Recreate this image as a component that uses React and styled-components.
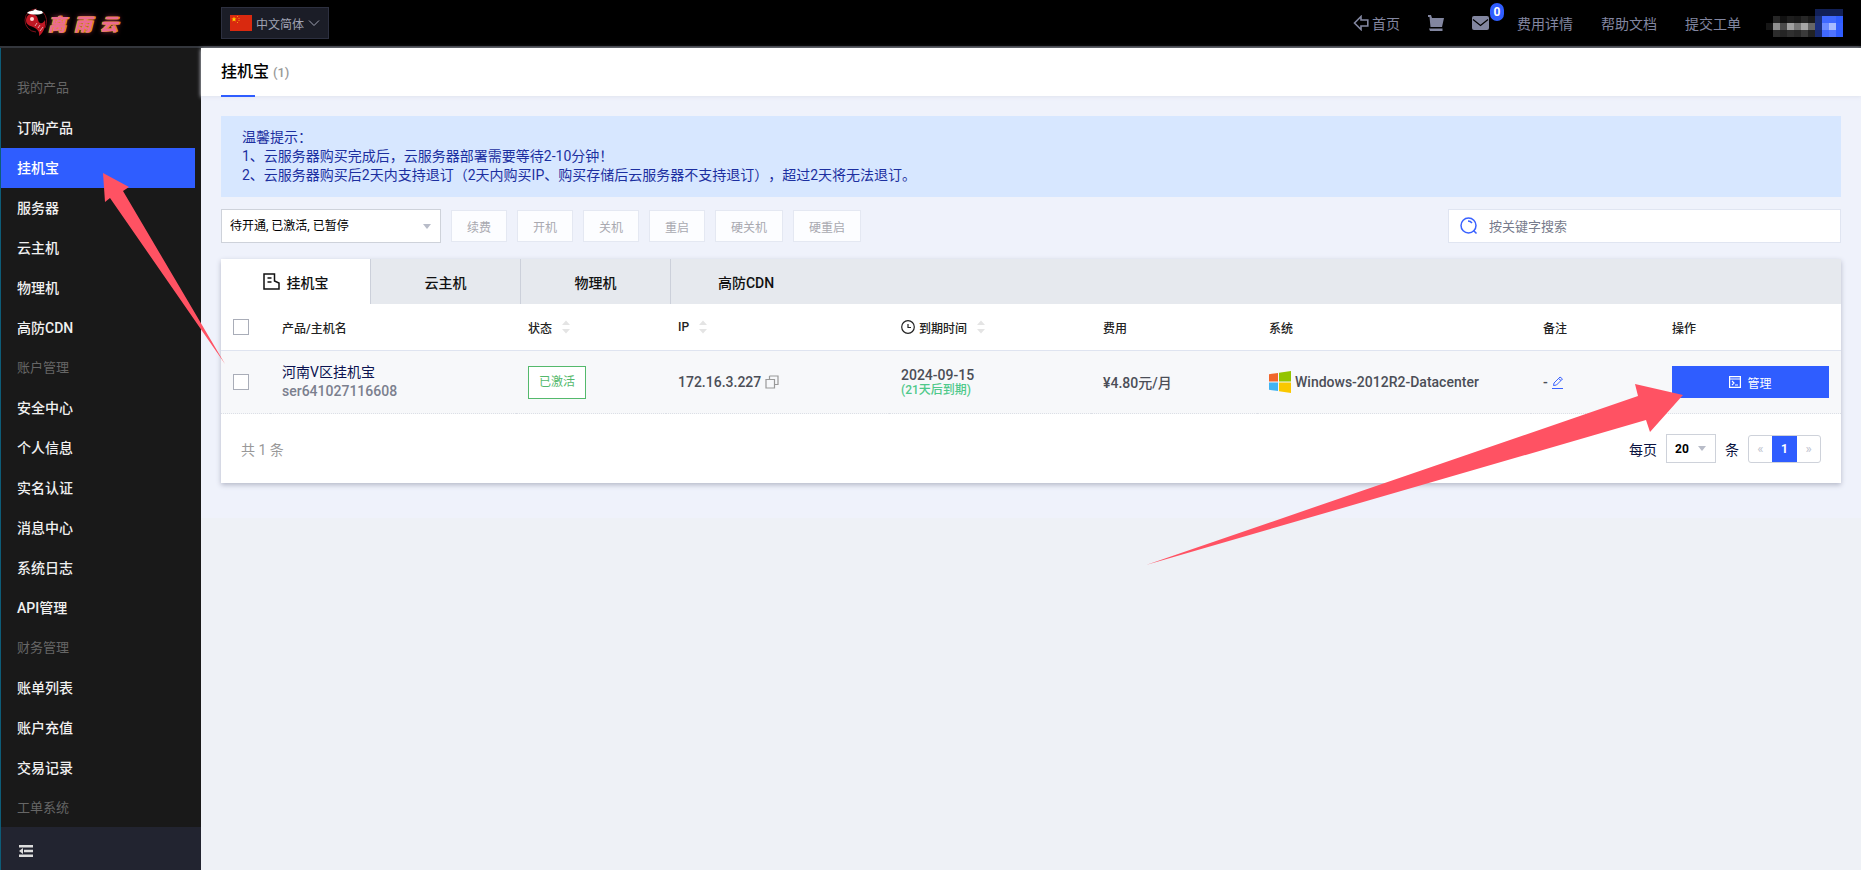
import React from 'react'
import styled, { createGlobalStyle, css } from 'styled-components'

const GlobalStyle = createGlobalStyle`
  * {
    box-sizing: border-box;
  }
  body {
    margin: 0;
    font-family: Roboto, 'Noto Sans CJK SC', sans-serif;
    font-size: 14px;
    color: #000;
    background: #eef1f6;
  }
  button, input, select {
    font-family: inherit;
  }
  a {
    color: inherit;
    text-decoration: none;
  }
`

const menu = [
  { title: '我的产品', items: ['订购产品', '挂机宝', '服务器', '云主机', '物理机', '高防CDN'] },
  { title: '账户管理', items: ['安全中心', '个人信息', '实名认证', '消息中心', '系统日志', 'API管理'] },
  { title: '财务管理', items: ['账单列表', '账户充值', '交易记录'] },
  { title: '工单系统', items: [] },
]

const actions = ['续费', '开机', '关机', '重启', '硬关机', '硬重启']

const tabs = ['挂机宝', '云主机', '物理机', '高防CDN']

const columns = [49, 246, 150, 223, 202, 166, 274, 129, 181]

const mosaic = [
  ['#000', '#262626', '#111', '#1e1e1e', '#191919', '#272727', '#1a1a1a', '#1c3076', '#3f68ff', '#3f68ff', '#2f5dff'],
  ['#161616', '#8f8f8f', '#4a4a4a', '#a0a0a0', '#777', '#a6a6a6', '#666', '#1a2f80', '#6b8bff', '#a9bbff', '#3560ff'],
  ['#000', '#2c2c2c', '#252525', '#303030', '#292929', '#3a3a3a', '#222', '#182a70', '#4068ff', '#4f74ff', '#2f5dff'],
]

const App = () => {
  return (
    <Page>
      <GlobalStyle />
      <Header>
        <Logo href="#">
          <LogoMark />
          <LogoText><span>离</span><span>雨</span><span>云</span></LogoText>
        </Logo>
        <LangButton>
          <Flag />
          中文简体
          <svg width="12" height="8" viewBox="0 0 12 8" fill="none" stroke="currentColor">
            <path d="M1 1.5 L6 6.5 L11 1.5" />
          </svg>
        </LangButton>
        <TopNav>
          <NavLink href="#">
            <svg width="16" height="16" viewBox="0 0 16 16" fill="none" stroke="currentColor" strokeWidth="1.600">
              <path d="M1.5 8 L8 1.5 V5 H14.8 V11 H8 V14.5 Z" />
            </svg>
            首页
          </NavLink>
          <NavLink href="#" aria-label="购物车">
            <svg width="16" height="17" viewBox="0 0 16 17" fill="currentColor">
              <path d="M0 0 H3 L4 3 H16 L14 12 H2.500 L1.500 2 H0 Z M1 13.500 H14.500 V16 H2 Z" />
            </svg>
          </NavLink>
          <NavLink href="#" aria-label="消息">
            <svg width="17" height="14" viewBox="0 0 17 14">
              <rect width="17" height="14" rx="2" fill="currentColor" />
              <path d="M1 3.500 L8.500 9.500 L16 3.500" fill="none" stroke="#000" strokeWidth="1.200" />
            </svg>
            <Badge>0</Badge>
          </NavLink>
          <NavLink href="#">费用详情</NavLink>
          <NavLink href="#">帮助文档</NavLink>
          <NavLink href="#">提交工单</NavLink>
        </TopNav>
        <UserMosaic />
      </Header>
      <Body>
        <Sidebar>
          <Menu>
            {menu.map((group) => (
              <React.Fragment key={group.title}>
                <MenuTitle>{group.title}</MenuTitle>
                {group.items.map((item) => (
                  <MenuItem key={item} href="#" $active={item === '挂机宝'}>{item}</MenuItem>
                ))}
              </React.Fragment>
            ))}
          </Menu>
          <Collapse aria-label="收起菜单">
            <svg width="14" height="12" viewBox="0 0 14 12" fill="currentColor">
              <path d="M0 0 H14 V2.500 H0 Z M5 4.800 H14 V7.200 H5 Z M0 9.500 H14 V12 H0 Z M0 6 L4 3 V9 Z" />
            </svg>
          </Collapse>
        </Sidebar>
        <Main>
          <TitleBar>
            <Title>挂机宝 <small>(1)</small></Title>
          </TitleBar>
          <Content>
            <Notice>
              温馨提示：<br />
              1、云服务器购买完成后，云服务器部署需要等待2-10分钟！<br />
              2、云服务器购买后2天内支持退订（2天内购买IP、购买存储后云服务器不支持退订），超过2天将无法退订。
            </Notice>
            <Toolbar>
              <SelectBox $width={220}>
                <select aria-label="状态筛选">
                  <option>待开通, 已激活, 已暂停</option>
                </select>
              </SelectBox>
              {actions.map((name) => (
                <ActionButton key={name} disabled>{name}</ActionButton>
              ))}
              <Search>
                <svg width="18" height="18" viewBox="0 0 18 18" fill="none" stroke="#3a62ff" strokeWidth="1.500">
                  <circle cx="8.500" cy="8.500" r="7.500" />
                  <path d="M13.500 13.500 L16.500 16.500 M8 4 Q10.500 4 12 6" />
                </svg>
                <input type="text" placeholder="按关键字搜索" aria-label="按关键字搜索" />
              </Search>
            </Toolbar>
            <Card>
              <Tabs>
                {tabs.map((name, i) => (
                  <Tab key={name} $active={i === 0}>
                    {i === 0 && (
                      <svg width="17" height="17" viewBox="0 0 17 17" fill="none" stroke="currentColor" strokeWidth="1.500">
                        <path d="M1 1 H11.500 V8 L16 10 V16 H1 Z M4.500 5 H8.500 M4.500 9 H8.500" />
                      </svg>
                    )}
                    {name}
                  </Tab>
                ))}
              </Tabs>
              <Table>
                <colgroup>
                  {columns.map((width, i) => <col key={i} width={width} />)}
                </colgroup>
                <thead>
                  <tr>
                    <th><Check aria-label="全选" /></th>
                    <th>产品/主机名</th>
                    <th><Inline>状态<Sort /></Inline></th>
                    <th><Inline>IP<Sort /></Inline></th>
                    <th>
                      <Inline>
                        <svg width="14" height="14" viewBox="0 0 14 14" fill="none" stroke="currentColor" strokeWidth="1.200">
                          <circle cx="7" cy="7" r="6.300" />
                          <path d="M7 4 V7.500 H10" />
                        </svg>
                        到期时间
                        <Sort />
                      </Inline>
                    </th>
                    <th>费用</th>
                    <th>系统</th>
                    <th>备注</th>
                    <th>操作</th>
                  </tr>
                </thead>
                <tbody>
                  <tr>
                    <td><Check aria-label="选择 ser641027116608" /></td>
                    <td>
                      <ProductName href="#">河南V区挂机宝</ProductName>
                      <HostName>ser641027116608</HostName>
                    </td>
                    <td><Status>已激活</Status></td>
                    <td>
                      <Inline>
                        172.16.3.227
                        <svg width="14" height="14" viewBox="0 0 14 14" fill="none" stroke="#999" strokeWidth="1.200">
                          <path d="M4.500 1 H13 V9.500 H9.500 M4.500 4.500 V1 M1 4.500 H9.500 V13 H1 Z" />
                        </svg>
                      </Inline>
                    </td>
                    <td>
                      2024-09-15
                      <Remain>(21天后到期)</Remain>
                    </td>
                    <td>¥4.80元/月</td>
                    <td>
                      <Inline>
                        <WindowsLogo />
                        Windows-2012R2-Datacenter
                      </Inline>
                    </td>
                    <td>
                      <Inline>
                        -
                        <svg width="12" height="13" viewBox="0 0 12 13" fill="none" stroke="#3a62ff">
                          <path d="M1.500 9.500 L2 7 L8 1 L10.500 3 L4.500 9 Z M6.500 2.500 L9 4.500 M0 12.500 H11" />
                        </svg>
                      </Inline>
                    </td>
                    <td>
                      <ManageButton>
                        <svg width="12" height="12" viewBox="0 0 12 12" fill="none" stroke="currentColor" strokeWidth="1.200">
                          <path d="M0.600 0.600 H11.400 V11.400 H0.600 Z M0.600 3 H11.400 M3 5 L5 7 L3 9 M6 9 H9" />
                        </svg>
                        管理
                      </ManageButton>
                    </td>
                  </tr>
                </tbody>
              </Table>
              <Footer>
                <Total>共 1 条</Total>
                <label htmlFor="page-size">每页</label>
                <SelectBox $width={50} $small>
                  <select id="page-size"><option>20</option></select>
                </SelectBox>
                <span>条</span>
                <Pager>
                  <button disabled>«</button>
                  <PageNow>1</PageNow>
                  <button disabled>»</button>
                </Pager>
              </Footer>
            </Card>
          </Content>
        </Main>
      </Body>
      <Arrows />
    </Page>
  )
}

const LogoMark = () => (
  <svg width="25" height="30" viewBox="0 0 25 30">
    <path d="M14 1 A11.500 11.500 0 1 0 13 24 M20 4 Q26 11 22 20" fill="none" stroke="#7a1018" />
    <path d="M3 12 C4 6 8 5 12 7 C16 9 14 13 17 15 C19 16 21 14 22 12 C23 18 21 24 16 28 C17 23 14 21 10 19 C5 17 3 16 3 12 Z" fill="#c01824" />
    <path d="M4 5 C7 2 10 4 12 1 C15 4 19 1 20 5 C17 7 9 7 4 5 Z" fill="#fff" />
    <circle cx="9" cy="11" r="2" fill="#ffd7d7" />
    <path d="M12 18 L14 15 M15 20 L17 17 M17 23 L20 19" fill="none" stroke="#e8a0a4" />
  </svg>
)

const Flag = () => (
  <svg width="22" height="16" viewBox="0 0 22 16">
    <rect width="22" height="16" fill="#d9290f" />
    <path d="M4 1.500 L4.700 3.400 H6.600 L5.100 4.600 L5.600 6.500 L4 5.400 L2.400 6.500 L2.900 4.600 L1.400 3.400 H3.300 Z" fill="#ffd500" />
    <path d="M7 1 h1 v1 h-1 Z M8.500 3 h1 v1 h-1 Z M8.500 5 h1 v1 h-1 Z M7 7 h1 v1 h-1 Z" fill="#f09a10" />
  </svg>
)

const WindowsLogo = () => (
  <svg width="22" height="22" viewBox="0 0 22 22">
    <path d="M0 3.200 L9 2 V10.500 H0 Z" fill="#f1652b" />
    <path d="M10 1.800 L22 0 V10.500 H10 Z" fill="#93c400" />
    <path d="M0 11.500 H9 V20 L0 18.800 Z" fill="#41b4f2" />
    <path d="M10 11.500 H22 V22 L10 20.200 Z" fill="#fac800" />
  </svg>
)

const Sort = () => (
  <SortIcon width="8" height="14" viewBox="0 0 8 14" fill="#e4e4e4">
    <path d="M0 5 L4 0.500 L8 5 Z M0 9 L4 13.500 L8 9 Z" />
  </SortIcon>
)

// 打码后的用户名
const UserMosaic = () => (
  <svg width="77" height="29" viewBox="0 0 77 29">
    <path d="M49 0 H77 V7 H49 Z" fill="#122056" />
    {mosaic.map((row, y) => row.map((fill, x) => (
      <rect key={`${x}-${y}`} x={x * 7} y={y * 7 + 7} width="7" height="7" fill={fill} />
    )))}
  </svg>
)

const Arrows = () => (
  <ArrowLayer width="1861" height="870" viewBox="0 0 1861 870" fill="#ff5263">
    <path d="M103 173 L129 187 L123 191 L225 364 L110 198 L105 202 Z" />
    <path d="M1146 565 L1638 396 L1635 384 L1683 395 L1650 432 L1646 420 Z" />
  </ArrowLayer>
)

const Page = styled('div')`
  position: relative;
  display: flex;
  flex-direction: column;
  height: 100vh;
  overflow: hidden;
`

const Header = styled('header')`
  display: flex;
  flex: none;
  align-items: center;
  height: 48px;
  padding-right: 18px;
  background: #000;
  border-bottom: 2px solid #33363c;
  color: #8286a0;
`

const Logo = styled('a')`
  display: flex;
  align-items: center;
  width: 221px;
  padding-left: 23px;
`

const LogoText = styled('span')`
  display: flex;
  gap: 8px;
  font-family: 'Noto Sans CJK SC', sans-serif;
  font-size: 18px;
  font-weight: 900;
  font-style: italic;
  color: #ec6a90;
  text-shadow: 1px 0 0 #d8a010, -1px 0 0 #d8a010, 0 0 5px #a0304a;
`

const LangButton = styled('button')`
  display: flex;
  align-items: center;
  gap: 4px;
  height: 32px;
  padding: 0 8px;
  font-size: 12px;
  color: #a0a3b4;
  background: #1b1d27;
  border: 1px solid #2d3040;
`

const TopNav = styled('nav')`
  display: flex;
  flex: 1;
  align-items: center;
  justify-content: flex-end;
  gap: 28px;
  padding-right: 25px;
`

const NavLink = styled('a')`
  position: relative;
  display: flex;
  align-items: center;
  gap: 3px;
`

const Badge = styled('span')`
  position: absolute;
  top: -13px;
  left: 18px;
  width: 14px;
  border-radius: 8px;
  background: #2f5dff;
  color: #fff;
  font-size: 12px;
  font-weight: 700;
  line-height: 18px;
  text-align: center;
`

const Body = styled('div')`
  display: flex;
  flex: 1;
  min-height: 0;
`

const Sidebar = styled('aside')`
  display: flex;
  flex: none;
  flex-direction: column;
  width: 201px;
  background: #191919;
  border-left: 1px solid #0d5c78;
`

const Menu = styled('nav')`
  flex: 1;
  min-height: 0;
  padding-top: 20px;
  overflow: hidden;
`

const MenuTitle = styled('div')`
  height: 40px;
  padding-left: 16px;
  font-size: 13px;
  line-height: 39px;
  color: #666;
`

const MenuItem = styled('a')`
  display: block;
  height: 40px;
  margin-right: 6px;
  padding-left: 16px;
  font-weight: 500;
  line-height: 40px;
  color: #f0f0f0;
  ${(props) => props.$active && css`
    background: #2f5dff;
    color: #fff;
  `}
`

const Collapse = styled('button')`
  display: flex;
  align-items: center;
  height: 43px;
  padding: 4px 18px 0;
  color: #ddd;
  background: #222430;
  border: 0;
`

const Main = styled('main')`
  flex: 1;
  min-width: 0;
`

const TitleBar = styled('div')`
  position: relative;
  height: 48px;
  padding: 0 20px;
  background: #fff;
  box-shadow: 0 1px 4px #dfe3ef;
`

const Title = styled('h1')`
  position: relative;
  margin: 0;
  font-size: 16px;
  font-weight: 500;
  line-height: 48px;
  small {
    font-size: 13px;
    color: #999;
  }
  &::after {
    content: '';
    position: absolute;
    bottom: 0;
    left: 0;
    width: 34px;
    height: 2px;
    background: #2f5dff;
  }
`

const Content = styled('div')`
  padding: 20px 20px 35px;
  background: #eff2fb;
`

const Notice = styled('div')`
  padding: 12px 21px;
  line-height: 19px;
  color: #1c2fa0;
  background: #d7e7ff;
  text-spacing-trim: space-all;
`

const Toolbar = styled('div')`
  display: flex;
  align-items: center;
  gap: 10px;
  margin: 12px 0 16px;
`

const SelectBox = styled('span')`
  display: flex;
  align-items: center;
  width: ${(props) => props.$width}px;
  height: ${(props) => (props.$small ? 29 : 34)}px;
  padding-right: 9px;
  background: #fff;
  border: 1px solid #ced2da;
  select {
    flex: 1;
    min-width: 0;
    padding: 0 8px;
    appearance: none;
    font-size: 12px;
    font-weight: ${(props) => (props.$small ? 700 : 400)};
    color: #000;
    background: none;
    border: 0;
  }
  &::after {
    content: '';
    border: 4px solid transparent;
    border-top: 5px solid #b8bcc8;
    border-bottom: 0;
  }
`

const ActionButton = styled('button')`
  height: 32px;
  padding: 0 15px;
  font-size: 12px;
  color: #a9a9b0;
  background: #fcfdff;
  border: 1px solid #e4e8f2;
`

const Search = styled('div')`
  display: flex;
  align-items: center;
  gap: 9px;
  width: 393px;
  height: 34px;
  margin-left: auto;
  padding: 0 11px;
  background: #fff;
  border: 1px solid #e0e5f1;
  input {
    flex: 1;
    font-size: 13px;
    border: 0;
    outline: none;
  }
  input::placeholder {
    color: #777b8c;
  }
`

const Card = styled('section')`
  background: #fff;
  box-shadow: 0 2px 5px #b4b8c8;
`

const Tabs = styled('div')`
  display: flex;
  height: 45px;
  background: #e6e9ee;
`

const Tab = styled('button')`
  display: flex;
  align-items: center;
  justify-content: center;
  gap: 7px;
  width: 150px;
  padding: 0;
  font-size: 14px;
  font-weight: 500;
  color: #111;
  background: ${(props) => (props.$active ? '#fff' : 'none')};
  border: 0;
  border-right: 1px solid #ccd0da;
  &:last-child {
    border-right: 0;
  }
`

const Table = styled('table')`
  width: 100%;
  table-layout: fixed;
  border-collapse: separate;
  border-spacing: 0;
  th, td {
    padding: 0 12px;
    text-align: left;
    font-weight: 500;
    white-space: nowrap;
  }
  th {
    height: 47px;
    font-size: 12px;
    color: #222;
    border-bottom: 1px solid #dfe4f0;
  }
  td {
    height: 63px;
    color: #4b4e57;
    background: #f7f8fa;
    border-bottom: 1px dotted #dcdfe6;
  }
`

const Check = styled('input').attrs({ type: 'checkbox' })`
  display: block;
  width: 16px;
  height: 16px;
  margin: 0;
  appearance: none;
  background: #fff;
  border: 1px solid #a9adb8;
`

const SortIcon = styled('svg')`
  margin-left: 6px;
`

const Inline = styled('span')`
  display: flex;
  align-items: center;
  gap: 4px;
`

const ProductName = styled('a')`
  display: block;
  font-weight: 400;
  line-height: 19px;
  color: #0a1250;
`

const HostName = styled('div')`
  line-height: 19px;
  color: #7b7f8e;
`

const Status = styled('span')`
  display: block;
  width: fit-content;
  height: 33px;
  padding: 0 10px;
  font-size: 12px;
  font-weight: 400;
  line-height: 31px;
  color: #54b96c;
  background: #fff;
  border: 1px solid #54b96c;
`

const Remain = styled('div')`
  font-size: 12px;
  line-height: 15px;
  color: #4fc98a;
`

const ManageButton = styled('button')`
  display: flex;
  align-items: center;
  justify-content: center;
  gap: 6px;
  width: 100%;
  height: 32px;
  font-size: 12px;
  color: #fff;
  background: #2f5dff;
  border: 0;
`

const Footer = styled('div')`
  display: flex;
  align-items: center;
  gap: 9px;
  height: 69px;
  padding: 0 20px;
  color: #0a1240;
`

const Total = styled('span')`
  flex: 1;
  color: #999;
`

const Pager = styled('div')`
  display: flex;
  height: 28px;
  border: 1px solid #ced2da;
  border-radius: 3px;
  button {
    width: 23px;
    padding: 0;
    color: #c0c4cf;
    background: none;
    border: 0;
  }
`

const PageNow = styled('span')`
  width: 25px;
  font-size: 12px;
  font-weight: 700;
  line-height: 26px;
  text-align: center;
  color: #fff;
  background: #2f5dff;
`

const ArrowLayer = styled('svg')`
  position: absolute;
  top: 0;
  left: 0;
  pointer-events: none;
`

export default App
